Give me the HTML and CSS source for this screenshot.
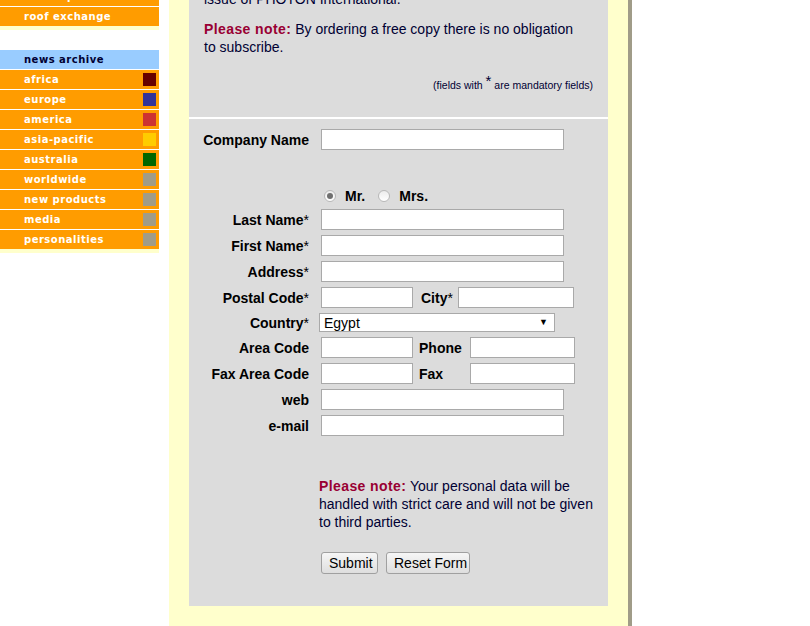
FILE: index.html
```html
<!DOCTYPE html>
<html>
<head>
    <title>PHOTON International - Free Copy</title>
    <link rel="stylesheet" href="styles.css">
</head>
<body>
    <div class="page">
        <!-- Left navigation -->
        <div class="sidebar">
            <div class="nav-group nav-group-top">
                <div class="nav-item">marketplace</div>
                <div class="nav-item nav-last">roof exchange</div>
            </div>
            <div class="nav-group">
                <div class="nav-header">news archive</div>
                <div class="nav-item">africa <span class="swatch swatch-africa"></span></div>
                <div class="nav-item">europe <span class="swatch swatch-europe"></span></div>
                <div class="nav-item">america <span class="swatch swatch-america"></span></div>
                <div class="nav-item">asia-pacific <span class="swatch swatch-asia"></span></div>
                <div class="nav-item">australia <span class="swatch swatch-australia"></span></div>
                <div class="nav-item">worldwide <span class="swatch"></span></div>
                <div class="nav-item">new products <span class="swatch"></span></div>
                <div class="nav-item">media <span class="swatch"></span></div>
                <div class="nav-item nav-last">personalities <span class="swatch"></span></div>
            </div>
        </div>

        <!-- Order form -->
        <div class="main">
            <div class="intro">
                <p>Order your free copy of the current<br>issue of PHOTON International.</p>
                <p><span class="note">Please note:</span> By ordering a free copy there is no obligation to subscribe.</p>
                <div class="fields-note">(fields with <span class="star">*</span> are mandatory fields)</div>
            </div>

            <form class="order-form" action="#" method="post">
                <div class="form-grid">
                    <label>Company Name</label>
                    <input type="text" class="input-field">

                    <div class="spacer"></div>

                    <div></div>
                    <div class="salutation">
                        <input type="radio" name="salutation" class="radio" checked> <span>Mr.</span>
                        <input type="radio" name="salutation" class="radio"> <span>Mrs.</span>
                    </div>

                    <label>Last Name<span class="req">*</span></label>
                    <input type="text" class="input-field">

                    <label>First Name<span class="req">*</span></label>
                    <input type="text" class="input-field">

                    <label>Address<span class="req">*</span></label>
                    <input type="text" class="input-field">

                    <label>Postal Code<span class="req">*</span></label>
                    <div class="field-pair">
                        <input type="text" class="input-field input-short">
                        <label class="sub-label city-label">City<span class="req">*</span></label>
                        <input type="text" class="input-field input-city">
                    </div>

                    <label>Country<span class="req">*</span></label>
                    <div>
                        <span class="select-wrap">
                            <select class="select-field">
                                <option>Egypt</option>
                            </select>
                        </span>
                    </div>

                    <label>Area Code</label>
                    <div class="field-pair">
                        <input type="text" class="input-field input-short">
                        <label class="sub-label phone-label">Phone</label>
                        <input type="text" class="input-field input-phone">
                    </div>

                    <label>Fax Area Code</label>
                    <div class="field-pair">
                        <input type="text" class="input-field input-short">
                        <label class="sub-label phone-label">Fax</label>
                        <input type="text" class="input-field input-phone">
                    </div>

                    <label>web</label>
                    <input type="text" class="input-field">

                    <label>e-mail</label>
                    <input type="text" class="input-field">
                </div>

                <p class="privacy"><span class="note">Please note:</span> Your personal data will be handled with strict care and will not be given to third parties.</p>

                <div class="buttons">
                    <input type="submit" value="Submit" class="btn btn-submit">
                    <input type="reset" value="Reset Form" class="btn btn-reset">
                </div>
            </form>
        </div>
    </div>
</body>
</html>
```

FILE: styles.css
```css
/* Page basics */
body {
    margin: 0;
    background-color: #ffffff;
    font-family: "Liberation Sans", Arial, sans-serif;
    font-size: 14px;
    color: #000033;
    overflow: hidden;
}

.page {
    display: flex;
    align-items: flex-start;
}

/* Left navigation */
.sidebar {
    width: 159px;
    margin-right: 10px;
    flex-shrink: 0;
}

.nav-group {
    margin-top: 20px;
}

.nav-group-top {
    margin-top: -13px; /* page is scrolled, first item is cut */
}

.nav-item,
.nav-header {
    height: 19px;
    line-height: 19px;
    padding: 0 3px 0 24px;
    border-bottom: 1px solid #ffffff;
    display: flex;
    justify-content: space-between;
    align-items: center;
    font-family: "DejaVu Sans", Verdana, sans-serif;
    font-weight: bold;
    font-size: 10px;
    letter-spacing: 0.5px;
    color: #ffffff;
    background-color: #ff9c00;
}

.nav-header {
    background-color: #99ccff;
    color: #000033;
}

.nav-last {
    border-bottom: 4px solid #ffffcc;
}

.swatch {
    width: 13px;
    height: 13px;
    background-color: #a09c88;
}

.swatch-africa { background-color: #660000; }
.swatch-europe { background-color: #333399; }
.swatch-america { background-color: #cc3333; }
.swatch-asia { background-color: #ffcc00; }
.swatch-australia { background-color: #006600; }

/* Main column */
.main {
    width: 419px;
    padding: 0 20px 21px 20px;
    background-color: #ffffcc;
    border-right: 4px solid #a09c88;
}

.intro {
    background-color: #dcdcdc;
    padding: 0 30px 25px 15px;
    margin-top: -28px;
    border-bottom: 2px solid #ffffff;
}

.intro p {
    margin: 0 0 12px 0;
    line-height: 18px;
}

.note {
    color: #990033;
    font-weight: bold;
    letter-spacing: 0.4px;
}

.fields-note {
    margin: 20px -15px 0 0;
    text-align: right;
    font-size: 10.5px;
    line-height: 14px;
}

.star {
    font-size: 15px;
    vertical-align: 3px;
    line-height: 10px;
}

/* Form */
.order-form {
    background-color: #dcdcdc;
    padding: 10px 0 32px 0;
}

.form-grid {
    display: grid;
    grid-template-columns: 120px auto;
    column-gap: 12px;
    row-gap: 5px;
    align-items: center;
}

.form-grid label {
    text-align: right;
    font-weight: bold;
    color: #000000;
}

.req {
    font-weight: normal;
}

.spacer {
    grid-column: 1 / -1;
    height: 28px;
}

.input-field {
    width: 243px;
    height: 21px;
    box-sizing: border-box;
    border: 1px solid #a9a9a9;
    padding: 1px 3px;
    margin: 0;
    background-color: #ffffff;
    font-family: "Liberation Sans", Arial, sans-serif;
    font-size: 14px;
}

.input-short {
    width: 92px;
}

.input-city {
    width: 116px;
}

.input-phone {
    width: 105px;
}

.field-pair {
    display: flex;
    align-items: center;
}

.form-grid .sub-label {
    text-align: left;
}

.city-label {
    margin-left: 8px;
    width: 37px;
}

.phone-label {
    margin-left: 6px;
    width: 51px;
}

/* Salutation radios */
.salutation {
    height: 16px;
    display: flex;
    align-items: center;
    font-weight: bold;
    color: #000000;
}

.radio {
    appearance: none;
    -webkit-appearance: none;
    width: 12px;
    height: 12px;
    margin: 0 9px 0 3px;
    border: 1px solid #b8b8b8;
    border-radius: 50%;
    background: linear-gradient(#ececec, #ffffff);
    box-sizing: border-box;
    position: relative;
}

.radio:checked::after {
    content: "";
    position: absolute;
    left: 2px;
    top: 2px;
    width: 6px;
    height: 6px;
    border-radius: 50%;
    background-color: #707070;
}

.salutation span {
    margin-right: 10px;
}

/* Country dropdown */
.select-wrap {
    position: relative;
    display: inline-block;
    margin-left: -2px;
}

.select-field {
    appearance: none;
    -webkit-appearance: none;
    width: 236px;
    height: 19px;
    border: 1px solid #a9a9a9;
    border-radius: 0;
    padding: 0 0 0 4px;
    margin: 0;
    background-color: #ffffff;
    font-family: "Liberation Sans", Arial, sans-serif;
    font-size: 14px;
    color: #000000;
    display: block;
}

.select-wrap::after {
    content: "\25BC";
    position: absolute;
    right: 7px;
    top: 4px;
    font-size: 9px;
    color: #000000;
    pointer-events: none;
}

/* Privacy note and buttons */
.privacy {
    margin: 41px 0 0 130px;
    width: 282px;
    line-height: 18px;
}

.buttons {
    margin: 21px 0 0 132px;
    display: flex;
    gap: 8px;
}

.btn {
    height: 22px;
    padding: 0 7px;
    border: 1px solid #a0a0a0;
    border-radius: 3px;
    background: linear-gradient(#f6f6f6, #dedede);
    font-family: "Liberation Sans", Arial, sans-serif;
    font-size: 14px;
    color: #000000;
    cursor: pointer;
}

.btn-submit {
    width: 57px;
}

.btn-reset {
    width: 84px;
}
```
